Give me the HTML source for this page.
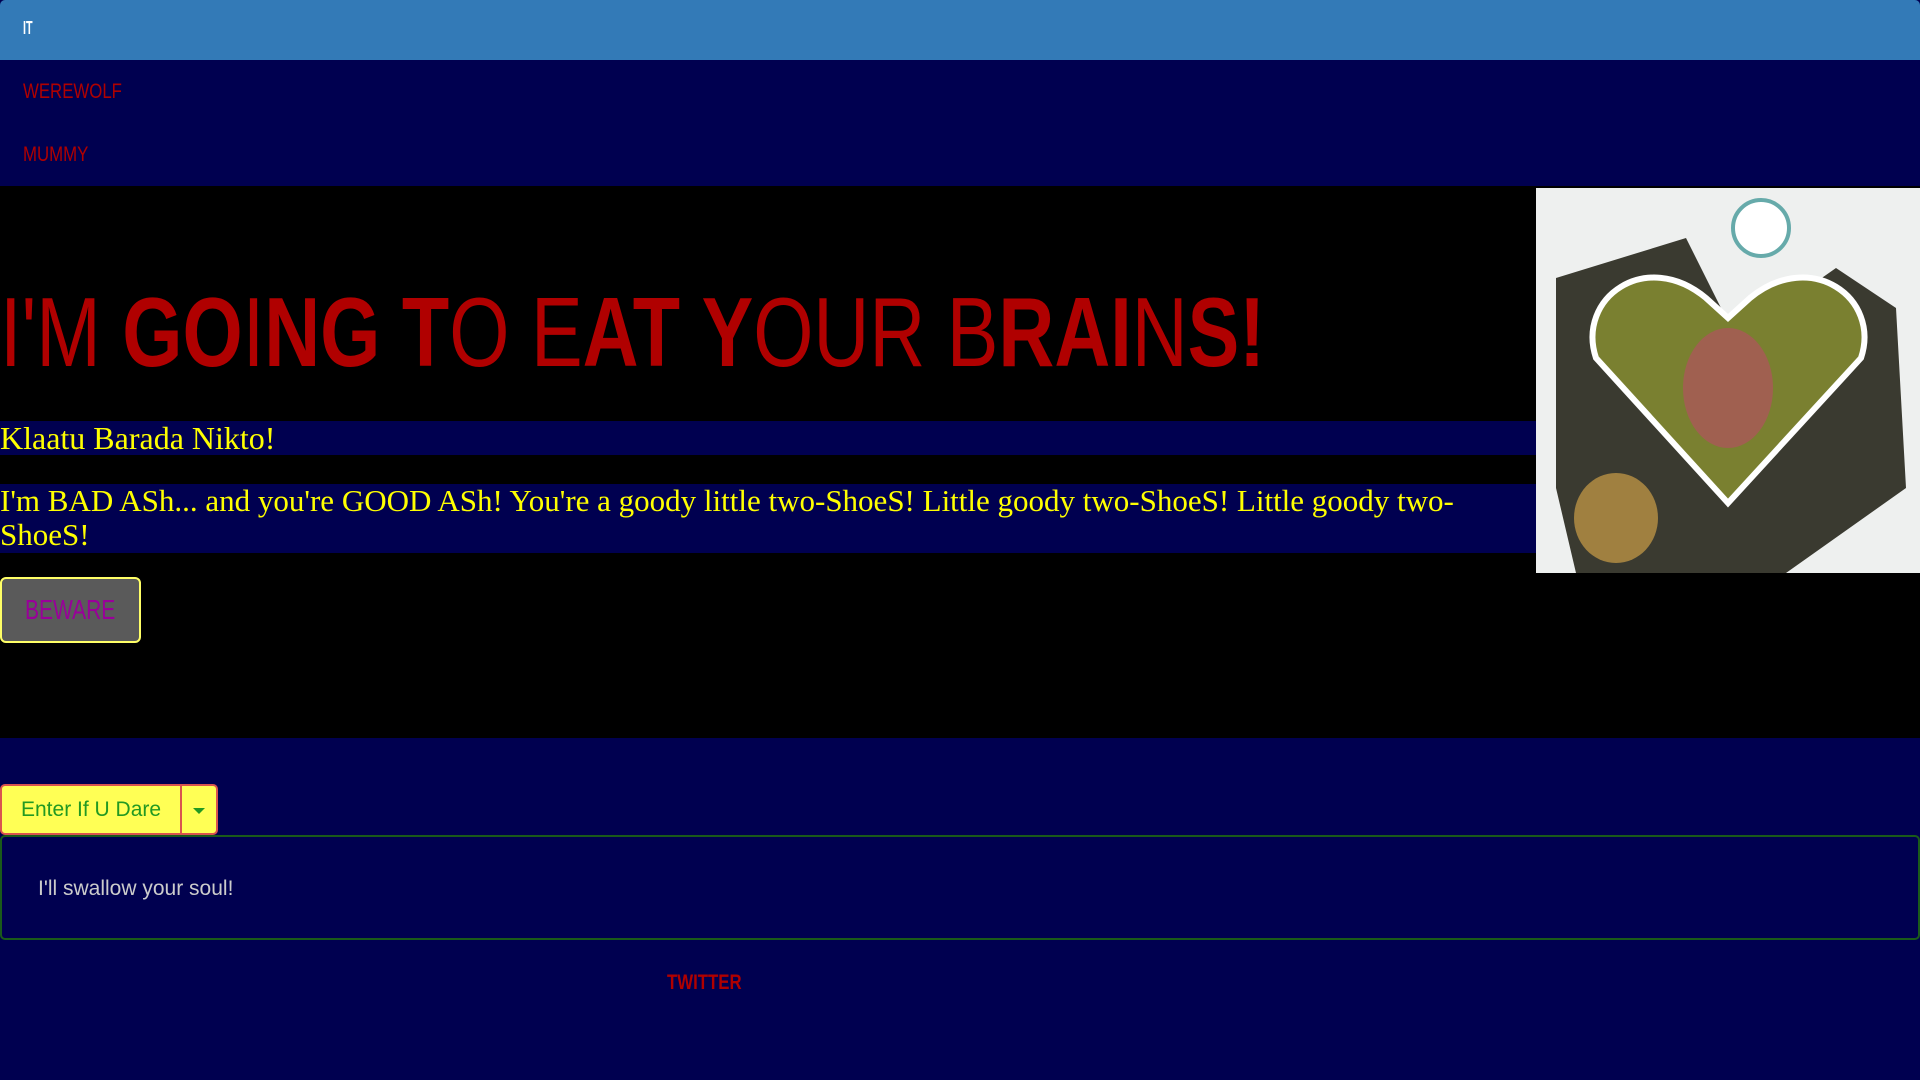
<!DOCTYPE html>
<html><head><meta charset="utf-8"><style>
body{margin:0;width:1920px;height:1080px;background:#000050;overflow:hidden;font-family:"Liberation Sans",sans-serif}
.top{height:60px;background:#337ab7;border-radius:5px 5px 0 0;position:relative}
.top span{position:absolute;left:23px;top:18px;color:#fff;font-size:18px;font-weight:bold;transform:scaleX(.6);transform-origin:left}
.nav{height:126px;background:#000050;position:relative}
.nav a{position:absolute;left:23px;color:#b00000;font-size:21px;transform:scaleX(.8);transform-origin:left}
.black{position:absolute;top:186px;left:0;width:1920px;height:552px;background:#000}
h1{position:absolute;left:0;top:282px;margin:0;font-size:98px;font-weight:normal;color:#b00000;white-space:nowrap;transform:scaleX(.79);transform-origin:left;line-height:100px}
.band{position:absolute;left:0;width:1536px;background:#000050;color:#ff0;font-family:"Liberation Serif",serif}
.img{position:absolute;left:1536px;top:188px;width:384px;height:385px;background:#eef0f0}
.bw{position:absolute;left:0;top:577px;width:137px;height:62px;background:#5a5a5a;border:2px solid #ff6;border-radius:6px;color:#909;font-size:28px;text-align:center;line-height:62px}
.bw span{display:inline-block;transform:scaleX(.75)}
.enter{position:absolute;left:0;top:784px;width:214px;height:47px;background:#ff5;border:2px solid #d9534f;border-radius:5px;box-sizing:content-box}
.enter span{position:absolute;left:19px;top:12px;color:#229922;font-size:21px}
.enter i{position:absolute;left:178px;top:0;width:2px;height:47px;background:#d9534f}
.enter b{position:absolute;left:191px;top:22px;border:6px solid transparent;border-top:6px solid #229922;border-bottom:0}
.well{position:absolute;left:0;top:835px;width:1916px;height:101px;border:2px solid #1a5a1a;border-radius:5px}
.well span{position:absolute;left:36px;top:40px;color:#ccc;font-size:21px}
.tw{position:absolute;left:667px;top:971px;color:#b00000;font-size:21px;font-weight:bold;transform:scaleX(.8);transform-origin:left}
</style></head><body>
<div class="top"><span>IT</span></div>
<div class="nav"><a style="top:20px">WEREWOLF</a><a style="top:83px">MUMMY</a></div>
<div class="black"></div>
<h1>I'M <b>GO</b>I<b>NG</b> <b>T</b>O E<b>AT</b> <b>Y</b>OUR B<b>RAI</b>N<b>S!</b></h1>
<div class="band" style="top:421px;height:34px;font-size:32px;line-height:34px">Klaatu Barada Nikto!</div>
<div class="band" style="top:484px;height:69px;font-size:31px;line-height:34px">I'm BAD ASh... and you're GOOD ASh! You're a goody little two-ShoeS! Little goody two-ShoeS! Little goody two-ShoeS!</div>
<div class="img"><svg width="384" height="385" viewBox="0 0 384 385">
<rect width="384" height="385" fill="#eef0ef"/>
<path d="M20 90 L150 50 L200 150 L300 80 L360 120 L370 300 L250 385 L40 385 L20 300Z" fill="#3a3a30"/>
<path d="M192 315 L60 170 C40 110 110 60 170 110 L192 130 L214 110 C275 60 345 110 325 170Z" fill="#7a8030" stroke="#fff" stroke-width="6"/>
<ellipse cx="192" cy="200" rx="45" ry="60" fill="#a06050"/>
<circle cx="225" cy="40" r="28" fill="#fff" stroke="#6aa" stroke-width="4"/>
<ellipse cx="80" cy="330" rx="42" ry="45" fill="#a08040"/>
</svg></div>
<div class="bw"><span>BEWARE</span></div>
<div class="enter"><span>Enter If U Dare</span><i></i><b></b></div>
<div class="well"><span>I'll swallow your soul!</span></div>
<div class="tw">TWITTER</div>
</body></html>
